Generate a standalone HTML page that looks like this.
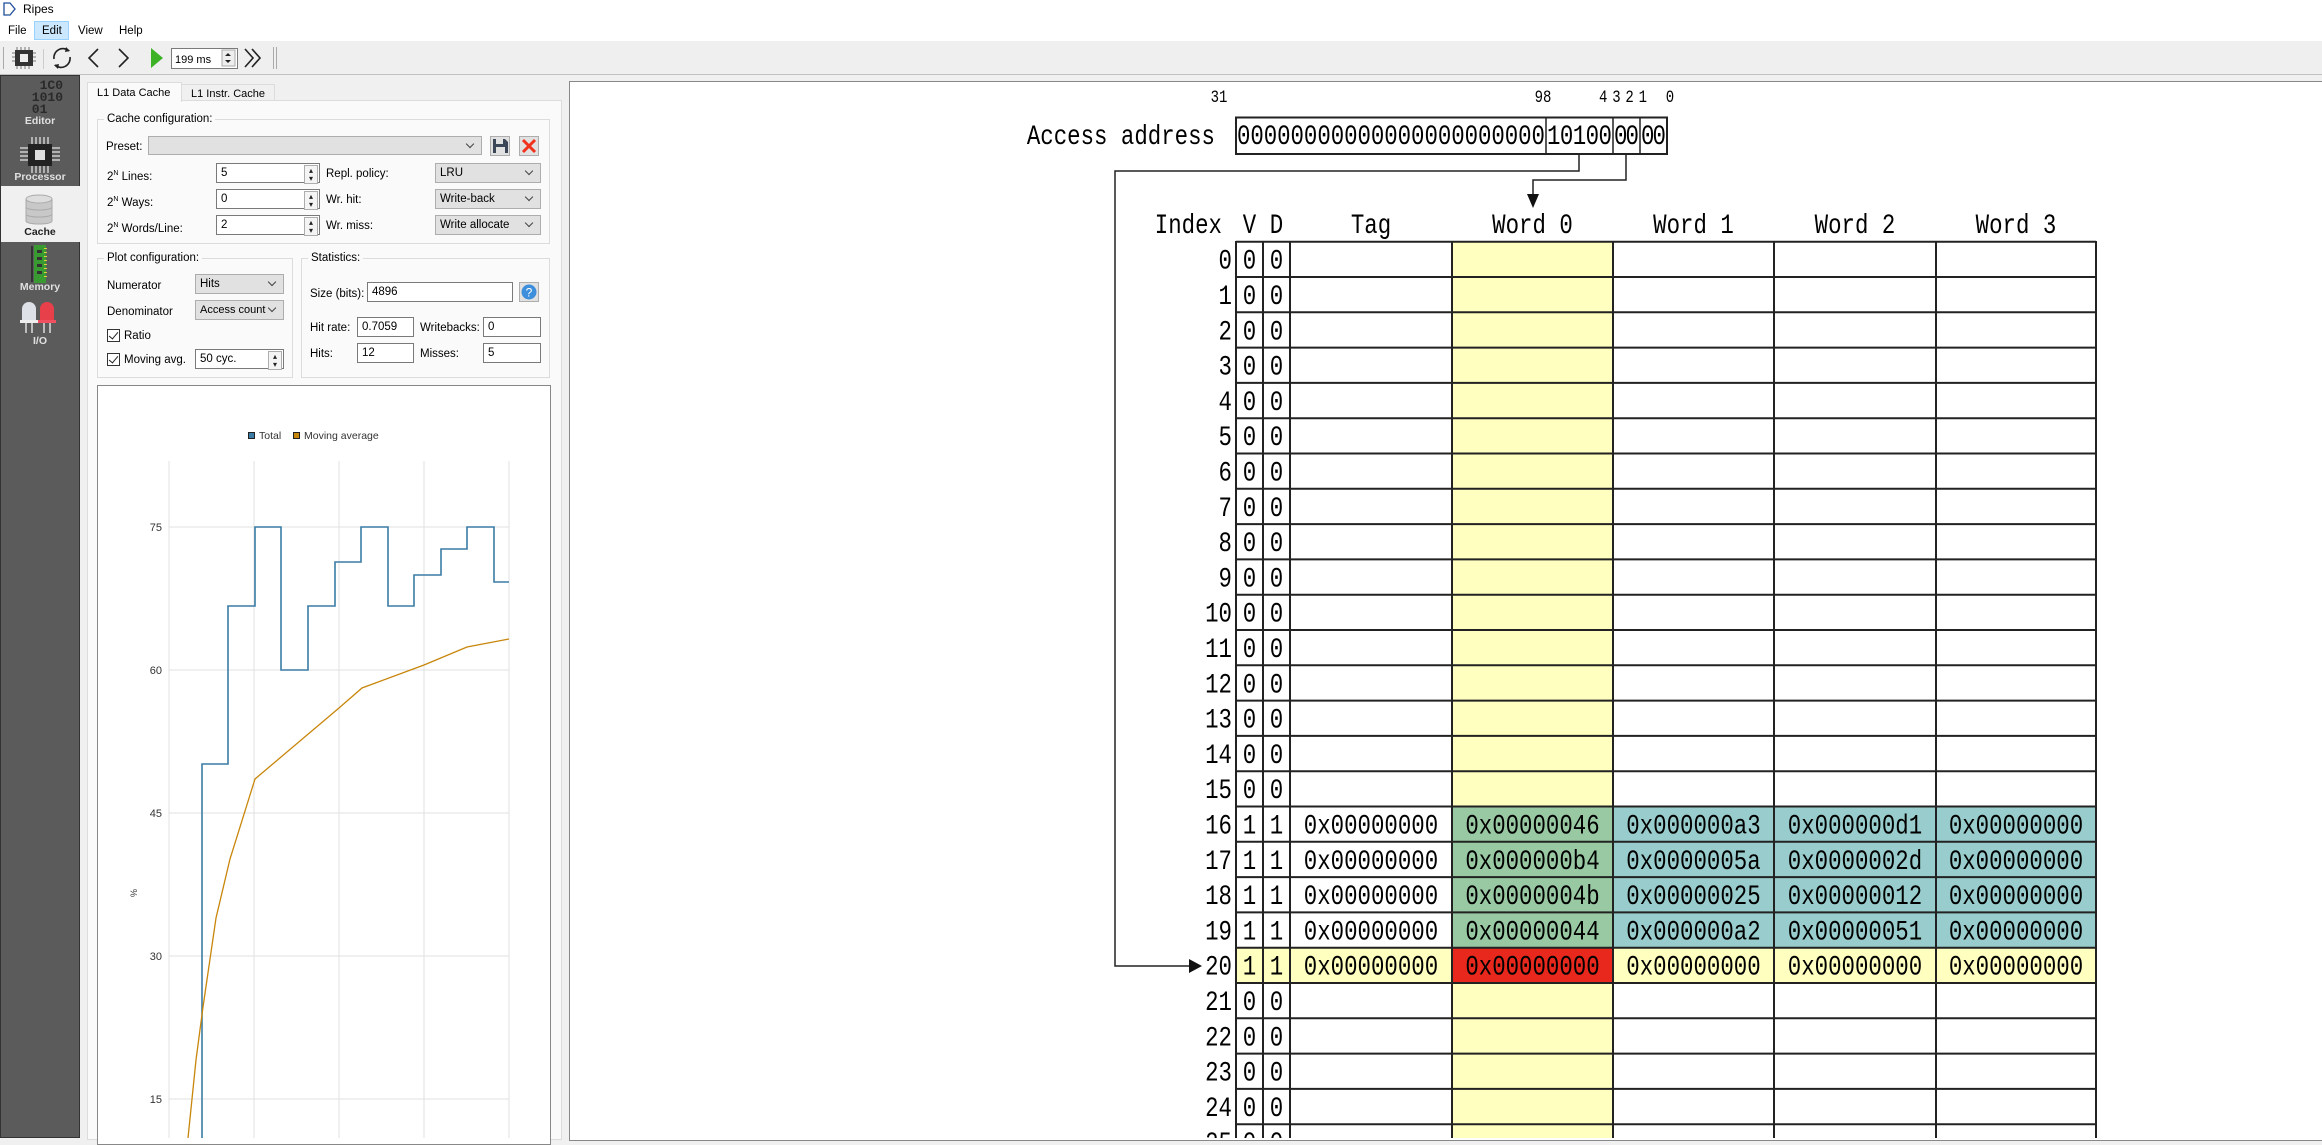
<!DOCTYPE html>
<html><head><meta charset="utf-8"><style>
*{margin:0;padding:0;box-sizing:border-box}
body{width:2322px;height:1138px;overflow:hidden;background:#f0f0f0;font-family:"Liberation Sans",sans-serif;font-size:11.5px;color:#000;position:relative}
.a{position:absolute}
.t{position:absolute;white-space:nowrap;line-height:14px}
.in{position:absolute;background:#fff;border:1px solid #7a7a7a;padding-left:4px;line-height:18px;font-size:11.5px}
.cb{position:absolute;background:#e1e1e1;border:1px solid #adadad;padding-left:4px;line-height:18px}
.cb:after{content:"";position:absolute;right:8px;top:4px;width:5px;height:5px;border-right:1px solid #444;border-bottom:1px solid #444;transform:rotate(45deg)}
.sp:after{content:"▴\A▾";white-space:pre;font-size:8px;line-height:8px;text-align:center;padding-top:1px;position:absolute;right:1px;top:1px;width:12px;height:16px;border:1px solid #adadad;background:#f4f4f4;color:#222}
.grp{position:absolute;border:1px solid #dcdcdc}
.gt{position:absolute;background:#fafafa;padding:0 3px;top:-8px;left:6px;line-height:14px}
.lab{position:absolute;width:80px;text-align:center;color:#e0e0e0;font-weight:bold;font-size:10.5px}
</style></head><body>
<!-- title -->
<div class="a" style="left:0;top:0;width:2322px;height:20px;background:#fff"></div>
<svg class="a" style="left:3px;top:2px" width="14" height="14"><path d="M1 1 H7 L12 7 L7 13 H1 Z" fill="none" stroke="#1f4e9a" stroke-width="1.3"/></svg>
<div class="t" style="left:23px;top:2px;font-size:12px">Ripes</div>
<!-- menu -->
<div class="a" style="left:0;top:20px;width:2322px;height:21px;background:#fff"></div>
<div class="a" style="left:34px;top:21px;width:35px;height:19px;background:#cce8ff;border:1px solid #99d1ff"></div>
<div class="t" style="left:8px;top:24px">File</div>
<div class="t" style="left:42px;top:24px">Edit</div>
<div class="t" style="left:78px;top:24px">View</div>
<div class="t" style="left:119px;top:24px">Help</div>
<!-- toolbar -->
<div class="a" style="left:0;top:41px;width:2322px;height:34px;background:#efefef;border-bottom:1px solid #c0c0c0"></div>
<svg class="a" style="left:0;top:41px" width="300" height="34">
<g fill="#aaa"><rect x="3" y="6" width="1" height="22"/><rect x="273" y="6" width="1" height="22"/><rect x="276" y="6" width="1" height="22"/></g>
<rect x="15" y="9" width="18" height="16" fill="#333"/><rect x="20" y="13" width="8" height="8" fill="#eee"/>
<g stroke="#777"><path d="M17 6v3M21 6v3M25 6v3M29 6v3M17 25v3M21 25v3M25 25v3M29 25v3M12 12h3M12 16h3M12 20h3M33 12h3M33 16h3M33 20h3"/></g>
<rect x="43" y="8" width="1" height="20" fill="#ccc"/>
<path d="M54 18a9 9 0 0 1 15-8M70 16a9 9 0 0 1-15 8" fill="none" stroke="#222" stroke-width="1.6"/>
<path d="M66 6l4 4-5 1z M58 28l-4-4 5-1z" fill="#222"/>
<path d="M98 8l-9 9 9 9M119 8l9 9-9 9" fill="none" stroke="#222" stroke-width="1.6"/>
<path d="M151 7v20l12-10z" fill="#3db227"/>
<rect x="171.5" y="7.5" width="66" height="20" fill="#fff" stroke="#7a7a7a"/>
<text x="175" y="22" font-family="Liberation Sans" font-size="11">199 ms</text>
<rect x="222" y="9" width="13" height="16" fill="#eee" stroke="#aaa"/><path d="M225 15l3-3 3 3zM225 19l3 3 3-3z" fill="#222"/>
<path d="M245 8l8 9-8 9M252 8l8 9-8 9" fill="none" stroke="#222" stroke-width="1.6"/>
</svg>
<!-- sidebar -->
<div class="a" style="left:0;top:75px;width:80px;height:1063px;background:#5b5b5b;border:1px solid #333"></div>
<div class="a" style="left:1px;top:186px;width:79px;height:56px;background:#f0f0f0"></div>
<div class="a" style="left:24px;top:80px;font:bold 13px 'Liberation Mono',monospace;color:#2a2a2a;line-height:12px;white-space:pre">  1C0
 1010
 01</div>
<div class="lab" style="left:0;top:115px">Editor</div>
<svg class="a" style="left:20px;top:137px" width="40" height="36"><rect x="8" y="7" width="24" height="22" fill="#222"/><rect x="15" y="13" width="10" height="10" fill="#ddd"/><g stroke="#ccc" stroke-width="1.5"><path d="M12 0v7M16 0v7M20 0v7M24 0v7M28 0v7M12 29v7M16 29v7M20 29v7M24 29v7M28 29v7M0 11h8M0 15h8M0 19h8M0 23h8M32 11h8M32 15h8M32 19h8M32 23h8"/></g></svg>
<div class="lab" style="left:0;top:171px">Processor</div>
<svg class="a" style="left:24px;top:193px" width="30" height="34"><g fill="#c8c8c8" stroke="#aaa"><path d="M2 6v22c0 4 26 4 26 0V6"/><ellipse cx="15" cy="6" rx="13" ry="4" fill="#ddd"/><path d="M2 14c0 4 26 4 26 0M2 21c0 4 26 4 26 0" fill="none"/></g></svg>
<div class="lab" style="left:0;top:226px;color:#222">Cache</div>
<svg class="a" style="left:30px;top:245px" width="20" height="38"><rect x="4" y="0" width="12" height="38" fill="#3a9a32"/><rect x="1" y="1" width="2" height="36" fill="#333"/><g fill="#333"><rect x="7" y="5" width="5" height="3"/><rect x="7" y="12" width="5" height="3"/><rect x="7" y="19" width="5" height="3"/><rect x="7" y="26" width="5" height="3"/></g><g fill="#e0d040"><rect x="14" y="3" width="3" height="1"/><rect x="14" y="7" width="3" height="1"/><rect x="14" y="11" width="3" height="1"/><rect x="14" y="15" width="3" height="1"/><rect x="14" y="19" width="3" height="1"/><rect x="14" y="23" width="3" height="1"/><rect x="14" y="27" width="3" height="1"/><rect x="14" y="31" width="3" height="1"/></g></svg>
<div class="lab" style="left:0;top:281px">Memory</div>
<svg class="a" style="left:20px;top:301px" width="40" height="32"><path d="M2 20V8a7 7 0 0 1 14 0v12z" fill="#dde0e6"/><rect x="0" y="19" width="18" height="3" fill="#eee"/><path d="M20 20V8a7 7 0 0 1 14 0v12z" fill="#e8404a"/><rect x="18" y="19" width="18" height="3" fill="#f05060"/><g stroke="#ddd" stroke-width="1.5"><path d="M6 22v10M12 22v10M24 22v10M30 22v10"/></g></svg>
<div class="lab" style="left:0;top:335px">I/O</div>
<!-- tabs -->
<div class="a" style="left:87px;top:100px;width:475px;height:1040px;background:#fafafa;border:1px solid #dcdcdc"></div>
<div class="a" style="left:87px;top:82px;width:95px;height:20px;background:#fafafa;border:1px solid #dcdcdc;border-bottom:none"></div>
<div class="a" style="left:181px;top:84px;width:94px;height:17px;background:#f0f0f0;border:1px solid #dcdcdc"></div>
<div class="t" style="left:97px;top:86px;font-size:11px">L1 Data Cache</div>
<div class="t" style="left:191px;top:87px;font-size:11px">L1 Instr. Cache</div>
<!-- cache config -->
<div class="grp" style="left:97px;top:119px;width:453px;height:125px"><div class="gt">Cache configuration:</div></div>
<div class="t" style="left:106px;top:140px">Preset:</div>
<div class="cb" style="left:148px;top:136px;width:334px;height:19px"></div>
<svg class="a" style="left:490px;top:136px" width="50" height="20"><rect x="0.5" y="0.5" width="19" height="19" fill="#e1e1e1" stroke="#adadad"/><path d="M3 3h12l3 3v11H3z" fill="#3c4659"/><rect x="6" y="3" width="7" height="5" fill="#e1e1e1"/><rect x="6" y="11" width="9" height="6" fill="#e1e1e1"/><rect x="29.5" y="0.5" width="19" height="19" fill="#e1e1e1" stroke="#adadad"/><path d="M33 4l12 12M45 4L33 16" stroke="#f0321c" stroke-width="3"/></svg>
<div class="t" style="left:107px;top:167px">2<sup style="font-size:7px">N</sup> Lines:</div>
<div class="t" style="left:107px;top:193px">2<sup style="font-size:7px">N</sup> Ways:</div>
<div class="t" style="left:107px;top:219px">2<sup style="font-size:7px">N</sup> Words/Line:</div>
<div class="in sp" style="left:216px;top:163px;width:104px;height:20px">5</div>
<div class="in sp" style="left:216px;top:189px;width:104px;height:20px">0</div>
<div class="in sp" style="left:216px;top:215px;width:104px;height:20px">2</div>
<div class="t" style="left:326px;top:167px">Repl. policy:</div>
<div class="t" style="left:326px;top:193px">Wr. hit:</div>
<div class="t" style="left:326px;top:219px">Wr. miss:</div>
<div class="cb" style="left:435px;top:163px;width:106px;height:20px">LRU</div>
<div class="cb" style="left:435px;top:189px;width:106px;height:20px">Write-back</div>
<div class="cb" style="left:435px;top:215px;width:106px;height:20px">Write allocate</div>
<!-- plot config -->
<div class="grp" style="left:97px;top:258px;width:196px;height:120px"><div class="gt">Plot configuration:</div></div>
<div class="t" style="left:107px;top:279px">Numerator</div>
<div class="cb" style="left:195px;top:274px;width:89px;height:20px">Hits</div>
<div class="t" style="left:107px;top:305px">Denominator</div>
<div class="cb" style="left:195px;top:300px;width:89px;height:20px;font-size:11px">Access count</div>
<div class="a" style="left:107px;top:329px;width:13px;height:13px;border:1px solid #333;background:#fff"></div>
<div class="a" style="left:111px;top:330px;width:5px;height:9px;border-right:1.5px solid #222;border-bottom:1.5px solid #222;transform:rotate(40deg)"></div>
<div class="t" style="left:124px;top:329px">Ratio</div>
<div class="a" style="left:107px;top:353px;width:13px;height:13px;border:1px solid #333;background:#fff"></div>
<div class="a" style="left:111px;top:354px;width:5px;height:9px;border-right:1.5px solid #222;border-bottom:1.5px solid #222;transform:rotate(40deg)"></div>
<div class="t" style="left:124px;top:353px">Moving avg.</div>
<div class="in sp" style="left:195px;top:349px;width:89px;height:20px">50 cyc.</div>
<!-- statistics -->
<div class="grp" style="left:301px;top:258px;width:249px;height:120px"><div class="gt">Statistics:</div></div>
<div class="t" style="left:310px;top:287px">Size (bits):</div>
<div class="in" style="left:367px;top:282px;width:146px;height:20px">4896</div>
<svg class="a" style="left:519px;top:282px" width="20" height="20"><rect x="0.5" y="0.5" width="19" height="19" fill="#e1e1e1" stroke="#adadad"/><circle cx="10" cy="10" r="7.5" fill="#3d8fdc"/><text x="10" y="14.5" text-anchor="middle" font-size="12" fill="#fff" font-family="Liberation Sans">?</text></svg>
<div class="t" style="left:310px;top:321px">Hit rate:</div>
<div class="in" style="left:357px;top:317px;width:57px;height:20px">0.7059</div>
<div class="t" style="left:420px;top:321px">Writebacks:</div>
<div class="in" style="left:483px;top:317px;width:58px;height:20px">0</div>
<div class="t" style="left:310px;top:347px">Hits:</div>
<div class="in" style="left:357px;top:343px;width:57px;height:20px">12</div>
<div class="t" style="left:420px;top:347px">Misses:</div>
<div class="in" style="left:483px;top:343px;width:58px;height:20px">5</div>
<!-- chart -->
<div class="a" style="left:97px;top:385px;width:454px;height:760px;background:#fff;border:1px solid #888"></div>
<svg class="a" style="left:0;top:0" width="600" height="1138" font-family="Liberation Sans" font-size="11">
<g stroke="#e0e0e0" stroke-width="1"><path d="M169 461V1138M254 461V1138M339 461V1138M424 461V1138M509 461V1138M169 527H509M169 670H509M169 813H509M169 956H509M169 1099H509"/></g>
<g fill="#333" text-anchor="end"><text x="162" y="531">75</text><text x="162" y="674">60</text><text x="162" y="817">45</text><text x="162" y="960">30</text><text x="162" y="1103">15</text></g>
<text x="0" y="0" transform="translate(137,893) rotate(-90)" font-size="9" fill="#333" text-anchor="middle">%</text>
<rect x="248.5" y="432.5" width="6" height="6" fill="#3a7ca5" stroke="#222"/><text x="259" y="439" fill="#333" font-size="10.5">Total</text>
<rect x="293.5" y="432.5" width="6" height="6" fill="#c8860a" stroke="#222"/><text x="304" y="439" fill="#333" font-size="10.5">Moving average</text>
<polyline fill="none" stroke="#3a7ca5" stroke-width="1.6" points="202,1138 202,764 228,764 228,606 255,606 255,527 281,527 281,670 308,670 308,606 335,606 335,562 361,562 361,527 388,527 388,606 414,606 414,575 441,575 441,549 467,549 467,527 494,527 494,582 509,582"/>
<polyline fill="none" stroke="#c8860a" stroke-width="1.3" points="188,1138 196,1060 203,1007 216,918 230,859 255,779 339,708 362,688 424,665 467,647 509,639"/>
</svg>
<!-- right view -->
<div class="a" style="left:569px;top:81px;width:1760px;height:1060px;background:#fff;border:1px solid #888"></div>
<svg class="a" style="left:0;top:0" width="2322" height="1138">
<rect x="1452" y="241.7" width="161" height="900" fill="#ffffc0"/>
<rect x="1452" y="806.9" width="161" height="141.2" fill="#99c9a3"/>
<rect x="1613" y="806.9" width="483" height="141.2" fill="#99cccc"/>
<rect x="1236" y="948.1" width="860" height="35.3" fill="#ffffc0"/>
<rect x="1452" y="948.1" width="161" height="35.3" fill="#e8281c"/>
<g stroke="#222" stroke-width="2">
<path d="M1236 241.7H2096M1236 277H2096M1236 312.3H2096M1236 347.6H2096M1236 382.9H2096M1236 418.2H2096M1236 453.5H2096M1236 488.8H2096M1236 524.1H2096M1236 559.4H2096M1236 594.7H2096M1236 630H2096M1236 665.3H2096M1236 700.6H2096M1236 735.9H2096M1236 771.2H2096M1236 806.5H2096M1236 841.8H2096M1236 877.1H2096M1236 912.4H2096M1236 947.7H2096M1236 983H2096M1236 1018.3H2096M1236 1053.6H2096M1236 1088.9H2096M1236 1124.2H2096"/>
<path d="M1236 241V1138M1263 241V1138M1290 241V1138M1452 241V1138M1613 241V1138M1774 241V1138M1936 241V1138M2096 241V1138"/>
</g>
<g stroke="#222" stroke-width="1.5" fill="none">
<rect x="1236" y="117.5" width="431" height="36.5" stroke-width="2"/>
<path d="M1546 118V154M1613 118V154M1640 118V154"/>
<path d="M1579 154V171H1115V966H1190M1626 154V180H1533V195"/>
</g>
<path d="M1202 966L1189 959V973Z M1533 208L1527 194H1539Z" fill="#111"/>
<g font-family="Liberation Mono,monospace" fill="#000" transform="scale(1,1.25)">
<g font-size="14"><text x="1219" y="81.6" text-anchor="middle">31</text><text x="1543" y="81.6" text-anchor="middle">98</text><text x="1599" y="81.6" textLength="48">4321</text><text x="1670" y="81.6" text-anchor="middle">0</text></g>
<g font-size="22.4">
<text x="1215" y="115.2" text-anchor="end">Access address</text>
<text x="1237" y="115.2" textLength="308">00000000000000000000000</text>
<text x="1547" y="115.2" textLength="65">10100</text>
<text x="1614" y="115.2" textLength="25">00</text>
<text x="1641" y="115.2" textLength="25">00</text>
<g text-anchor="middle"><text x="1249.5" y="186.4">V</text><text x="1276.5" y="186.4">D</text><text x="1371" y="186.4">Tag</text><text x="1532.5" y="186.4">Word 0</text><text x="1693.5" y="186.4">Word 1</text><text x="1855" y="186.4">Word 2</text><text x="2016" y="186.4">Word 3</text></g>
<text x="1222" y="186.4" text-anchor="end">Index</text>
<g text-anchor="end">
<text x="1232" y="214.96">0</text><text x="1232" y="243.2">1</text><text x="1232" y="271.44">2</text><text x="1232" y="299.68">3</text><text x="1232" y="327.92">4</text><text x="1232" y="356.16">5</text><text x="1232" y="384.4">6</text><text x="1232" y="412.64">7</text><text x="1232" y="440.88">8</text><text x="1232" y="469.12">9</text><text x="1232" y="497.36">10</text><text x="1232" y="525.6">11</text><text x="1232" y="553.84">12</text><text x="1232" y="582.08">13</text><text x="1232" y="610.32">14</text><text x="1232" y="638.56">15</text><text x="1232" y="666.8">16</text><text x="1232" y="695.04">17</text><text x="1232" y="723.28">18</text><text x="1232" y="751.52">19</text><text x="1232" y="779.76">20</text><text x="1232" y="808">21</text><text x="1232" y="836.24">22</text><text x="1232" y="864.48">23</text><text x="1232" y="892.72">24</text><text x="1232" y="920.96">25</text>
</g>
<g text-anchor="middle">
<text x="1249.5" y="214.96">0</text><text x="1276.5" y="214.96">0</text>
<text x="1249.5" y="243.2">0</text><text x="1276.5" y="243.2">0</text>
<text x="1249.5" y="271.44">0</text><text x="1276.5" y="271.44">0</text>
<text x="1249.5" y="299.68">0</text><text x="1276.5" y="299.68">0</text>
<text x="1249.5" y="327.92">0</text><text x="1276.5" y="327.92">0</text>
<text x="1249.5" y="356.16">0</text><text x="1276.5" y="356.16">0</text>
<text x="1249.5" y="384.4">0</text><text x="1276.5" y="384.4">0</text>
<text x="1249.5" y="412.64">0</text><text x="1276.5" y="412.64">0</text>
<text x="1249.5" y="440.88">0</text><text x="1276.5" y="440.88">0</text>
<text x="1249.5" y="469.12">0</text><text x="1276.5" y="469.12">0</text>
<text x="1249.5" y="497.36">0</text><text x="1276.5" y="497.36">0</text>
<text x="1249.5" y="525.6">0</text><text x="1276.5" y="525.6">0</text>
<text x="1249.5" y="553.84">0</text><text x="1276.5" y="553.84">0</text>
<text x="1249.5" y="582.08">0</text><text x="1276.5" y="582.08">0</text>
<text x="1249.5" y="610.32">0</text><text x="1276.5" y="610.32">0</text>
<text x="1249.5" y="638.56">0</text><text x="1276.5" y="638.56">0</text>
<text x="1249.5" y="666.8">1</text><text x="1276.5" y="666.8">1</text>
<text x="1249.5" y="695.04">1</text><text x="1276.5" y="695.04">1</text>
<text x="1249.5" y="723.28">1</text><text x="1276.5" y="723.28">1</text>
<text x="1249.5" y="751.52">1</text><text x="1276.5" y="751.52">1</text>
<text x="1249.5" y="779.76">1</text><text x="1276.5" y="779.76">1</text>
<text x="1249.5" y="808">0</text><text x="1276.5" y="808">0</text>
<text x="1249.5" y="836.24">0</text><text x="1276.5" y="836.24">0</text>
<text x="1249.5" y="864.48">0</text><text x="1276.5" y="864.48">0</text>
<text x="1249.5" y="892.72">0</text><text x="1276.5" y="892.72">0</text>
<text x="1249.5" y="920.96">0</text><text x="1276.5" y="920.96">0</text>
<text x="1371" y="666.8">0x00000000</text><text x="1532.5" y="666.8">0x00000046</text><text x="1693.5" y="666.8">0x000000a3</text><text x="1855" y="666.8">0x000000d1</text><text x="2016" y="666.8">0x00000000</text>
<text x="1371" y="695.04">0x00000000</text><text x="1532.5" y="695.04">0x000000b4</text><text x="1693.5" y="695.04">0x0000005a</text><text x="1855" y="695.04">0x0000002d</text><text x="2016" y="695.04">0x00000000</text>
<text x="1371" y="723.28">0x00000000</text><text x="1532.5" y="723.28">0x0000004b</text><text x="1693.5" y="723.28">0x00000025</text><text x="1855" y="723.28">0x00000012</text><text x="2016" y="723.28">0x00000000</text>
<text x="1371" y="751.52">0x00000000</text><text x="1532.5" y="751.52">0x00000044</text><text x="1693.5" y="751.52">0x000000a2</text><text x="1855" y="751.52">0x00000051</text><text x="2016" y="751.52">0x00000000</text>
<text x="1371" y="779.76">0x00000000</text><text x="1532.5" y="779.76">0x00000000</text><text x="1693.5" y="779.76">0x00000000</text><text x="1855" y="779.76">0x00000000</text><text x="2016" y="779.76">0x00000000</text>
</g>
</g>
</g>
</svg>
</body></html>
